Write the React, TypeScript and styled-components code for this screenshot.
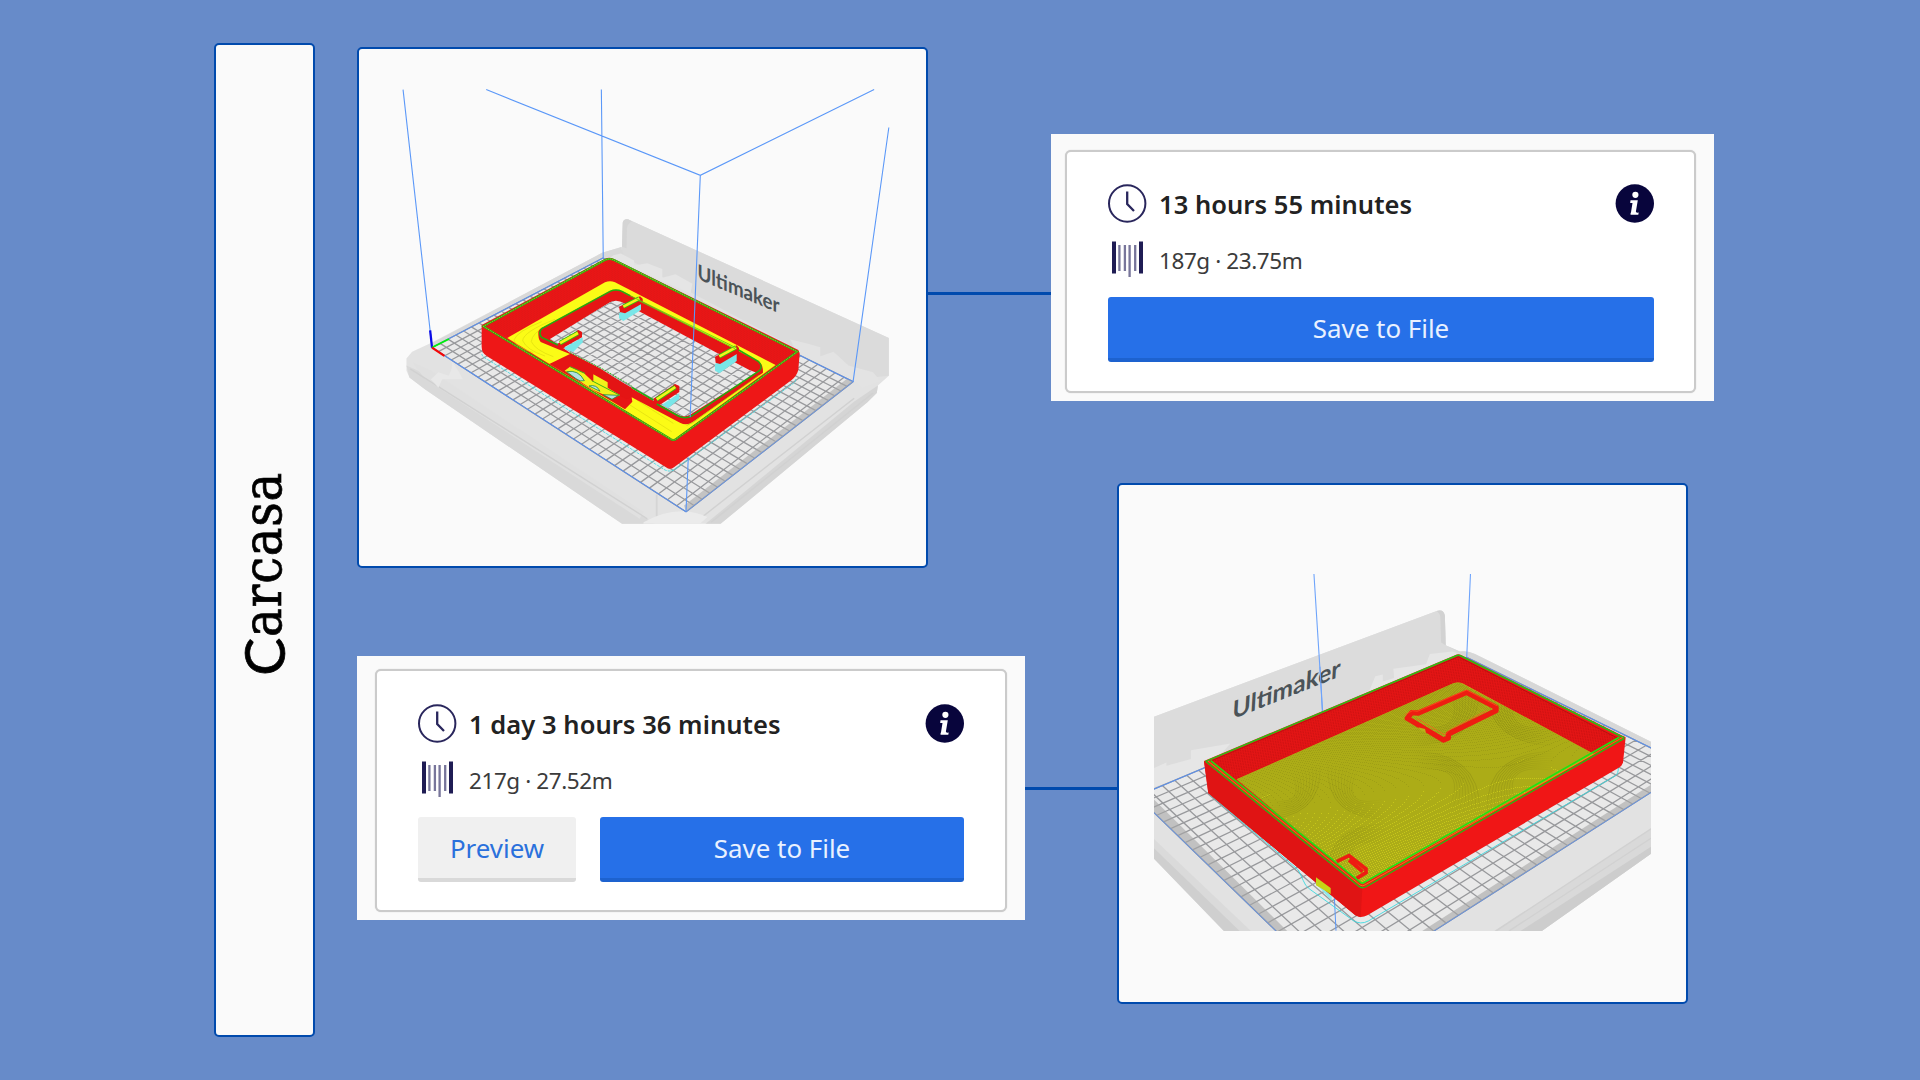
import React from "react";
import styled, { createGlobalStyle } from "styled-components";

const Global = createGlobalStyle`
  * { box-sizing: border-box; }
  body { margin: 0; background: #678bc9; }
`;

const Board = styled.main`
  display: flex;
  align-items: flex-start;
  width: 1920px;
  height: 1080px;
  padding: 43px 0 0 214px;
  overflow: hidden;
  background: #678bc9;
  font-family: "Noto Sans", "Open Sans", sans-serif;
`;

const Sidebar = styled.aside`
  display: flex;
  align-items: center;
  justify-content: center;
  width: 101px;
  height: 994px;
  margin-right: 42px;
  border: 2.5px solid #004aad;
  border-radius: 5px;
  background: #fafafa;
`;

const SideTitle = styled.h1`
  margin: 67px 4px 0 0;
  font-family: "DejaVu Serif Condensed", "DejaVu Serif", serif;
  font-stretch: condensed;
  font-weight: 400;
  font-size: 53.5px;
  line-height: 60px;
  letter-spacing: 0.7px;
  writing-mode: vertical-rl;
  transform: rotate(180deg);
  color: #000;
  -webkit-text-stroke: 0.7px #000;
  &::first-letter {
    font-family: Lato, sans-serif;
    font-size: 57px;
  }
`;

const Column = styled.section<{ $width: number; $top: number; $gap: number }>`
  display: flex;
  flex-direction: column;
  flex: none;
  width: ${(p) => p.$width}px;
  padding-top: ${(p) => p.$top}px;
  gap: ${(p) => p.$gap}px;
`;

const Line = styled.div`
  display: flex;
  align-items: flex-start;
`;

const Connector = styled.div<{ $top: number; $width?: number }>`
  flex: ${(p) => (p.$width ? "none" : "1")};
  width: ${(p) => (p.$width ? `${p.$width}px` : "auto")};
  height: 2.5px;
  margin-top: ${(p) => p.$top}px;
  background: #004aad;
`;

const Panel = styled.figure`
  flex: none;
  width: 571px;
  height: 521px;
  margin: 0;
  border: 2.5px solid #004aad;
  border-radius: 5px;
  background: #fafafa;
  overflow: hidden;
`;

const Scene = styled.svg`
  display: block;
  width: 567px;
  height: 517px;
`;

const Backing = styled.div<{ $w: number; $h: number; $pad: string }>`
  display: flex;
  flex: none;
  width: ${(p) => p.$w}px;
  height: ${(p) => p.$h}px;
  padding: ${(p) => p.$pad};
  background: #fafafa;
`;

const Card = styled.article<{ $pad: string }>`
  flex: 1;
  display: flex;
  flex-direction: column;
  border: 2px solid #cbcbcb;
  border-radius: 6px;
  padding: ${(p) => p.$pad};
  background: #fff;
  box-shadow: 0 0 1px #c4c4c4;
`;

const Row = styled.div<{ $h: number; $mt?: number }>`
  display: flex;
  align-items: center;
  height: ${(p) => p.$h}px;
  margin-top: ${(p) => p.$mt ?? 0}px;
`;

const IconSlot = styled.span`
  display: flex;
  width: 51px;
`;

const Time = styled.strong`
  flex: 1;
  font-size: 25.5px;
  line-height: 38px;
  font-weight: 600;
  letter-spacing: 0.05px;
  padding-top: 1px;
  color: #222;
  white-space: nowrap;
`;

const Usage = styled.span`
  padding-top: 3px;
  font-size: 22.5px;
  line-height: 34px;
  letter-spacing: -0.42px;
  color: #3b3b3b;
  white-space: nowrap;
`;

const Buttons = styled.div<{ $mt: number }>`
  display: flex;
  gap: 24px;
  margin-top: ${(p) => p.$mt}px;
`;

const Button = styled.button<{ $primary?: boolean }>`
  flex: ${(p) => (p.$primary ? "1" : "0 0 158px")};
  height: 65px;
  padding: 1px 0 0;
  border: 0;
  border-bottom: 4px solid ${(p) => (p.$primary ? "#1d62cf" : "#d9d9d9")};
  border-radius: 3px;
  background: ${(p) => (p.$primary ? "#2670e8" : "#f0f0f0")};
  color: ${(p) => (p.$primary ? "#e9f1ff" : "#2a70dc")};
  font: 400 25.9px/36px "Noto Sans", "Open Sans", sans-serif;
`;

const Clock = () => (
  <svg width="39" height="39" viewBox="0 0 39 39" fill="none" stroke="#29265c">
    <circle cx="19.2" cy="19.5" r="18.2" strokeWidth="2" />
    <path d="M19.2 7.5V20l6.8 7" strokeWidth="2.3" />
  </svg>
);

const Spool = () => (
  <svg width="39" height="37" viewBox="-4 0 39 37">
    <path d="M0 0.5h4v32h-4zM27 0.5h4v32h-4z" fill="#1f1c54" />
    <path d="M7.4 4v26M12.9 4v26M17.6 4v32M23.2 4v26" stroke="#77759a" strokeWidth="2.3" />
  </svg>
);

const Info = () => (
  <svg width="39" height="39" viewBox="0 0 39 39">
    <circle cx="19.8" cy="19.5" r="19.2" fill="#08053c" />
    <circle cx="20.4" cy="10.8" r="3.1" fill="#fff" />
    <path d="M15.5 16.2h7.3l-1.9 11.4q-.2 1.6 2.8 1l-.4 2.2h-7.6q-.6-.5.4-3l1.4-8.8h-2.3z" fill="#fff" />
  </svg>
);

type Pt = [number, number];

/* Perspective mapping of the unit square onto the quad a, b, c, d. */
function projector([a, b, c, d]: Pt[]) {
  const dx1 = b[0] - c[0], dx2 = d[0] - c[0], sx = a[0] - b[0] + c[0] - d[0];
  const dy1 = b[1] - c[1], dy2 = d[1] - c[1], sy = a[1] - b[1] + c[1] - d[1];
  const det = dx1 * dy2 - dx2 * dy1;
  const g = (sx * dy2 - dx2 * sy) / det;
  const h = (dx1 * sy - sx * dy1) / det;
  return (u: number, v: number): Pt => {
    const w = g * u + h * v + 1;
    return [
      ((b[0] - a[0] + g * b[0]) * u + (d[0] - a[0] + h * d[0]) * v + a[0]) / w,
      ((b[1] - a[1] + g * b[1]) * u + (d[1] - a[1] + h * d[1]) * v + a[1]) / w,
    ];
  };
}

function gridPath(quad: Pt[], nu: number, nv: number) {
  const p = projector(quad);
  const seg = (s: Pt, e: Pt) => `M${s[0].toFixed(1)} ${s[1].toFixed(1)}L${e[0].toFixed(1)} ${e[1].toFixed(1)}`;
  let d = "";
  for (let i = 0; i <= nu; i++) d += seg(p(i / nu, 0), p(i / nu, 1));
  for (let j = 0; j <= nv; j++) d += seg(p(0, j / nv), p(1, j / nv));
  return d;
}

const poly = (q: Pt[]) => "M" + q.map((p) => p.join(" ")).join("L") + "Z";

const Plate = ({ quad, nu, nv }: { quad: Pt[]; nu: number; nv: number }) => (
  <>
    <path d={poly(quad)} fill="#e9e9e9" />
    <path d={gridPath(quad, nu, nv)} fill="none" stroke="#98999c" strokeWidth="1.3" vectorEffect="non-scaling-stroke" />
    <path d={poly(quad)} fill="none" stroke="#5b8fea" strokeWidth="1.1" vectorEffect="non-scaling-stroke" />
  </>
);

const frameQuad: Pt[] = [[218, 893], [893, 1370], [1337, 992], [672, 633]];
const trayQuad: Pt[] = [[72, 918], [608, 1486], [1542, 834], [948, 515]];

const MESH = "translate(350 40) scale(.37628 .34439)";
const PART = "translate(470 250) scale(.33333)";

const Clip = ({ support, body, top }: { support: string; body: string; top: string }) => (
  <>
    <path d={support} fill="#79e6e8" />
    <path d={body} fill="#e61414" />
    <path d={top} fill="none" stroke="#2fc20f" strokeWidth="13" />
    <path d={top} fill="none" stroke="#f4f41a" strokeWidth="8" />
  </>
);

const FrameScene = () => (
  <Scene viewBox="359 49 567 517">
    <defs>
      <clipPath id="opening">
        <path
          transform={PART}
          d="M240 267 L420 157 Q440 146 462 160 L740 308 L838 360 L860 368 L660 494 Q640 504 620 492 L485 415 L390 355 L300 308 Z"
        />
      </clipPath>
      <pattern id="layers" width="3" height="3" patternUnits="userSpaceOnUse">
        <path d="M0 .5h1M2 2.5h1" stroke="#b50a0a" strokeWidth=".8" opacity=".3" />
      </pattern>
      <pattern id="gaps" width="9" height="6" patternUnits="userSpaceOnUse">
        <path d="M1 1h1M5 4h1" stroke="#5a0505" strokeWidth="1" opacity=".38" />
      </pattern>
    </defs>
    <g transform={MESH}>
      <path d="M150 925L165 905L215 880L670 618L723 600L725 530Q728 518 740 521L1432 865V975L1403 1003L1400 1025L1375 1052L985 1405H723L200 1015L158 980L150 960Z" fill="#e2e2e2" />
      <path d="M723 600L725 530Q728 518 740 521L1432 865V975L1340 985L720 625Z" fill="#dbdbdb" />
      <path d="M725 530Q728 518 740 521L750 527Q738 532 736 545L735 605L723 600Z" fill="#d4d4d4" />
      <path d="M215 882L670 618L720 602L728 625L672 633L218 893Z" fill="#d9d9d9" />
      <path d="M150 945L180 960L810 1405H723L200 1015L158 980Z" fill="#d9d9d9" />
      <path d="M165 935L215 960L780 1370L770 1390L200 985Z" fill="#e0e0e0" />
      <path d="M1403 1003L1400 1025L1375 1052L985 1405H945L1340 1050Z" fill="#d5d5d5" />
      <path d="M160 955L790 1390M1390 1025L960 1400M1340 1040L930 1390" stroke="#d1d1d1" strokeWidth="4" fill="none" />
      <path d="M815 1320V1400" stroke="#d5d5d5" strokeWidth="5" />
      <path d="M780 1400Q870 1345 950 1385L930 1405H780Z" fill="#ebebeb" />
      <path d="M700 625L720 620L755 640V655L790 648L830 665V690L865 680L910 708L905 735L690 634Z" fill="#e5e5e5" />
      <path d="M1170 870L1210 880L1250 892V918L1285 905L1325 945L1390 965L1410 990L1360 1010L1337 988L1190 915Z" fill="#e3e3e3" />
      <path d="M215 985L235 965L262 975Q275 950 270 930L290 965L300 985L245 985L235 1010Z" fill="#e8e8e8" />
      <Plate quad={frameQuad} nu={33} nv={24} />
      <path d="M893 1370L1337 992L1320 984L888 1352Z" fill="#aaa" opacity=".6" />
    </g>
    <text transform="matrix(1 .42 0 1.06 697.5 279)" fontFamily="Lato, sans-serif" fontWeight="700" fontSize="20" textLength="82" lengthAdjust="spacingAndGlyphs" fill="#4b5358">
      Ultimaker
    </text>
    <g transform={PART}>
      <path d="M35 312Q38 322 55 330L585 660Q600 667 615 658L970 400Q978 395 977 385" fill="none" stroke="#3fd8de" strokeWidth="2.5" strokeDasharray="9 3" />
      <path d="M35 225L405 26Q418 20 432 27L985 300L989 310L985 360Q980 378 965 390L612 652Q600 661 588 652L50 318Q35 308 35 290Z" fill="#f01717" />
      <path d="M45 228L418 30L980 305L917 345L435 97Q420 90 405 97L112 262Z" fill="#e81616" />
      <path d="M45 228L418 30L980 305L917 345L435 97Q420 90 405 97L112 262Z" fill="url(#gaps)" />
      <path d="M35 225L610 572L988 310L985 360L965 390L600 660L35 305Z" fill="url(#layers)" />
      <path d="M112 264L405 97Q420 90 435 97L917 345L610 570Z" fill="#fbfb16" />
      <path d="M215 215Q140 245 132 270Q135 290 190 308M255 208Q160 245 158 272Q170 300 225 318M230 228Q185 250 184 275Q195 300 250 320M500 450L610 520M480 465L605 545" fill="none" stroke="#dedb10" strokeWidth="2" />
      <path d="M205 245Q208 236 220 232L420 123Q440 115 460 125L868 335Q880 345 879 368L668 516Q650 528 630 518L485 442L487 455L465 478L238 342L300 312L270 300L212 276Q204 268 205 245Z" fill="#e61515" />
      <path d="M868 375L668 518L650 526" fill="none" stroke="#a8c80c" strokeWidth="2" />
    </g>
    <g clipPath="url(#opening)">
      <g transform={MESH}>
        <Plate quad={frameQuad} nu={33} nv={24} />
      </g>
    </g>
    <g transform={PART}>
      <path d="M300 311L485 413L487 440L470 448L400 410L310 345Z" fill="#e41414" />
      <path d="M284 362L300 350L342 370L370 396V373L413 397V413L450 436L425 445L370 420L342 402Z" fill="#f2f21a" />
      <path d="M290 365Q325 358 343 392Q330 396 318 386ZM357 408Q380 402 390 424ZM400 434L446 436L426 448Z" fill="#b4dfe2" stroke="#23903a" strokeWidth="2.5" />
      <path d="M300 350L345 370M365 392L450 436" fill="none" stroke="#3fb516" strokeWidth="3" />
      <Clip support="M447 190L513 155V180L460 213L447 205Z" body="M447 170L510 139L518 146V160L465 190L450 186Z" top="M460 170L508 145" />
      <Clip support="M285 292L338 262V277L310 306L285 298Z" body="M262 282L325 240L336 246V262L285 290L275 300Z" top="M270 279L324 249" />
      <Clip support="M735 342L800 308V333L748 370L735 362Z" body="M735 320L800 286L807 294V308L750 342L737 338Z" top="M748 319L798 292" />
      <Clip support="M575 465L628 430V446L595 475Z" body="M550 446L615 402L628 408V426L570 464L552 462Z" top="M560 448L616 411" />
      <path d="M458 126L800 294M506 152L795 296" fill="none" stroke="#5cd011" strokeWidth="2.5" />
      <path
        d="M264 285L215 262Q204 250 215 236L420 124Q438 116 456 124L480 137M806 300L866 335Q880 350 868 362L665 498Q645 508 625 498L560 462M550 450L485 412"
        fill="none" stroke="#1fae10" strokeWidth="4.5"
      />
      <path d="M40 229L405 30Q418 24 432 30L982 305L620 566Q610 574 600 566L40 229Z" fill="none" stroke="#24b012" strokeWidth="6" />
      <path d="M40 229L405 30Q418 24 432 30L982 305L620 566Q610 574 600 566L40 229Z" fill="none" stroke="#f2c419" strokeWidth="2.2" strokeDasharray="3 3" />
      <path d="M300 308L400 358L485 408" fill="none" stroke="#35b412" strokeWidth="3" strokeDasharray="5 4" />
    </g>
    <g transform={MESH} fill="none">
      <path
        d="M141 144L218 893M668 144L673 633M362 144L931 393L1393 144M1432 254L1337 992M931 393L904 1095M899 1212L893 1370"
        stroke="#5b98f8" strokeWidth="1.1" vectorEffect="non-scaling-stroke"
      />
      <path d="M218 893L213 843" stroke="#0a0ae6" strokeWidth="6" />
      <path d="M218 893L263 868" stroke="#00ee0c" strokeWidth="5" />
      <path d="M218 893L251 917" stroke="#f40606" strokeWidth="6" />
    </g>
  </Scene>
);

const TRAY_MESH = "translate(1110 480) scale(.37628 .34439)";
const TRAY_PART = "translate(1190 640) scale(.33333)";
const floorQuad: Pt[] = [[60, 385], [517, 800], [1270, 370], [805, 125]];

function infill() {
  const p = projector(floorQuad);
  let d = "";
  for (let i = 0; i <= 190; i++) {
    const t = i / 190;
    const a = p(t, 0), b = p(t, 1);
    d += `M${a[0].toFixed(2)} ${a[1].toFixed(2)}L${b[0].toFixed(2)} ${b[1].toFixed(2)}`;
  }
  return d;
}

/* Curved bands that fan out where the infill threads interfere. */
function ripples(cx: number, cy: number, rx: number, ry: number) {
  let d = "";
  for (let i = 1; i <= 9; i++) {
    const k = i * 8;
    for (const sx of [-1, 1]) {
      for (const sy of [-1, 1]) {
        d += `M${cx + sx * k * 1.5} ${cy + sy * ry}Q${cx + sx * k * 0.4} ${cy + sy * k * 0.35} ${cx + sx * rx} ${cy + sy * k}`;
      }
    }
  }
  return d;
}

const TrayScene = () => (
  <Scene viewBox="1119 485 567 517">
    <defs>
      <clipPath id="viewport">
        <rect x="1154" y="570" width="497" height="361" />
      </clipPath>
      <clipPath id="floor">
        <path d="M140 418L790 130Q805 124 820 131L1212 342L517 733Z" />
      </clipPath>
      <radialGradient id="fadeRight" gradientUnits="userSpaceOnUse" cx="880" cy="325" r="220">
        <stop offset="0" stopColor="#6f6f0e" stopOpacity=".5" />
        <stop offset="1" stopColor="#6f6f0e" stopOpacity="0" />
      </radialGradient>
      <radialGradient id="fadeLeft" gradientUnits="userSpaceOnUse" cx="402" cy="545" r="190">
        <stop offset="0" stopColor="#6f6f0e" stopOpacity=".45" />
        <stop offset="1" stopColor="#6f6f0e" stopOpacity="0" />
      </radialGradient>
      <pattern id="threads" width="5" height="8" patternUnits="userSpaceOnUse" patternTransform="rotate(8)">
        <path d="M1 0V6" stroke="#8c0606" strokeWidth="1.4" opacity=".5" />
      </pattern>
    </defs>
    <g clipPath="url(#viewport)">
      <g transform={TRAY_MESH}>
        <path d="M110 690L870 380Q887 374 890 395L892 480L930 498Q950 494 970 505L1445 764V1080L1147 1310H303L110 1092Z" fill="#e2e2e2" />
        <path d="M110 690L870 380Q887 374 890 395L892 480L948 515L110 900Z" fill="#dcdcdc" />
        <path d="M868 381Q887 374 890 395L892 480L880 472L878 400Q878 388 868 381Z" fill="#d2d2d2" />
        <path d="M892 480L930 498Q950 494 970 505L1445 764V785L948 515Z" fill="#d7d7d7" />
        <path d="M110 840L150 820V830L215 810V785L320 765L300 790L240 845L110 895ZM690 610L705 570L725 565V585L755 575L753 548L840 535L850 505L910 498L940 510L660 625Z" fill="#e6e6e6" />
        <path d="M110 1045L360 1310H303L110 1092Z" fill="#cfcfcf" />
        <path d="M110 1035L375 1310H345L110 1062Z" fill="#dadada" />
        <path d="M1445 1010L1020 1310H1147L1445 1080Z" fill="#d9d9d9" />
        <path d="M1445 1060L1090 1310H1147L1445 1080Z" fill="#cdcdcd" />
        <path d="M1445 1008L1025 1310M1445 1035L1060 1310" stroke="#d1d1d1" strokeWidth="4" />
        <Plate quad={trayQuad} nu={24} nv={33} />
        <path d="M72 918L608 1486L625 1476L98 907ZM608 1486L1542 834L1525 824L600 1470Z" fill="#a6a6a6" opacity=".6" />
        <path d="M542 273L565 670M958 273L948 515" fill="none" stroke="#6ea4fb" strokeWidth="1.1" vectorEffect="non-scaling-stroke" />
      </g>
      <text transform="matrix(1 -.4 -.06 1 1232 719.5)" fontFamily="Lato, sans-serif" fontWeight="700" fontSize="25" textLength="108" lengthAdjust="spacingAndGlyphs" fill="#4b5358">
        Ultimaker
      </text>
      <g transform={TRAY_PART}>
        <path d="M433 770L438 872" stroke="#5b98f8" strokeWidth="3" />
        <path d="M390 80L397 216" stroke="#6ea4fb" strokeWidth="3" />
        <path d="M55 460L325 690L340 722Q345 738 360 748L490 842Q512 855 535 843L1275 408Q1286 402 1285 380" fill="none" stroke="#35d9df" strokeWidth="2.6" />
        <path d="M378 732L425 762V782Z" fill="#8ee9eb" />
        <path d="M42 363L795 46Q805 40 815 46L1307 292L1299 368Q1296 378 1285 384L532 826Q512 836 496 826L55 460Z" fill="#f01616" />
        <path d="M42 363L517 740L512 832L496 826L55 460Z" fill="#e01414" />
        <path d="M60 365L805 50L1290 298L1212 342L820 131Q805 124 790 130L140 418Z" fill="#e51515" />
        <path d="M60 365L805 50L1290 298L1212 342L820 131Q805 124 790 130L140 418Z" fill="url(#threads)" />
        <path d="M140 418L790 130Q805 124 820 131L1212 342L517 733Z" fill="#c6c61a" />
        <g clipPath="url(#floor)">
          <path d={infill()} fill="none" stroke="#929214" strokeWidth="2" shapeRendering="crispEdges" opacity=".75" />
          <path d={ripples(880, 325, 240, 190)} fill="none" stroke="url(#fadeRight)" strokeWidth="3" />
          <path d={ripples(402, 545, 200, 170)} fill="none" stroke="url(#fadeLeft)" strokeWidth="3" />
        </g>
        <path d="M652 235L760 300L775 294V282L918 212V202L830 157L685 219L665 218Z" fill="none" stroke="#ee1c12" strokeWidth="16" strokeLinejoin="round" />
        <path d="M644 224L668 212L682 214L830 150L922 198M680 235L765 285L778 270L890 212" fill="none" stroke="#ff5a1c" strokeWidth="2" />
        <path d="M685 262L705 267L708 278L690 270Z" fill="#b8b11a" />
        <path d="M440 665L477 647L528 687V698L500 715M477 660L518 695" fill="none" stroke="#ee1c12" strokeWidth="11" />
        <path d="M378 712L422 744V762L378 736Z" fill="#c6d315" />
        <path d="M60 364L805 50L1290 298" fill="none" stroke="#8d0d0d" strokeWidth="1.5" />
        <path d="M47 364L797 48Q805 43 813 48L1303 294" fill="none" stroke="#24c414" strokeWidth="4.5" />
        <path d="M47 364L508 740Q517 746 527 741L1303 295" fill="none" stroke="#1fc314" strokeWidth="4" />
        <path d="M54 363L510 735Q517 740 525 735L1298 292" fill="none" stroke="#f0b513" strokeWidth="2" />
        <path d="M62 362L511 727Q517 732 523 727L1288 292" fill="none" stroke="#1ee414" strokeWidth="5" />
      </g>
    </g>
  </Scene>
);

export default function App() {
  return (
    <>
      <Global />
      <Board>
        <Sidebar>
          <SideTitle>Carcasa</SideTitle>
        </Sidebar>
        <Column $width={694} $top={4} $gap={88}>
          <Line>
            <Panel>
              <FrameScene />
            </Panel>
            <Connector $top={245} />
          </Line>
          <Line>
            <Backing $w={668} $h={264} $pad="13px 18px 8px 18px">
              <Card $pad="33px 41px 0 41px">
                <Row $h={39}>
                  <IconSlot><Clock /></IconSlot>
                  <Time>1 day 3 hours 36 minutes</Time>
                  <Info />
                </Row>
                <Row $h={37} $mt={18}>
                  <IconSlot><Spool /></IconSlot>
                  <Usage>217g · 27.52m</Usage>
                </Row>
                <Buttons $mt={19}>
                  <Button>Preview</Button>
                  <Button $primary>Save to File</Button>
                </Buttons>
              </Card>
            </Backing>
            <Connector $top={131} />
          </Line>
        </Column>
        <Column $width={663} $top={91} $gap={82}>
          <Backing $w={663} $h={267} $pad="16px 18px 8px 14px">
            <Card $pad="32px 40px 0 41px">
              <Row $h={39}>
                <IconSlot><Clock /></IconSlot>
                <Time>13 hours 55 minutes</Time>
                <Info />
              </Row>
              <Row $h={37} $mt={18}>
                <IconSlot><Spool /></IconSlot>
                <Usage>187g · 23.75m</Usage>
              </Row>
              <Buttons $mt={19}>
                <Button $primary>Save to File</Button>
              </Buttons>
            </Card>
          </Backing>
          <Line>
            <Connector $top={304} $width={66} />
            <Panel>
              <TrayScene />
            </Panel>
          </Line>
        </Column>
      </Board>
    </>
  );
}
